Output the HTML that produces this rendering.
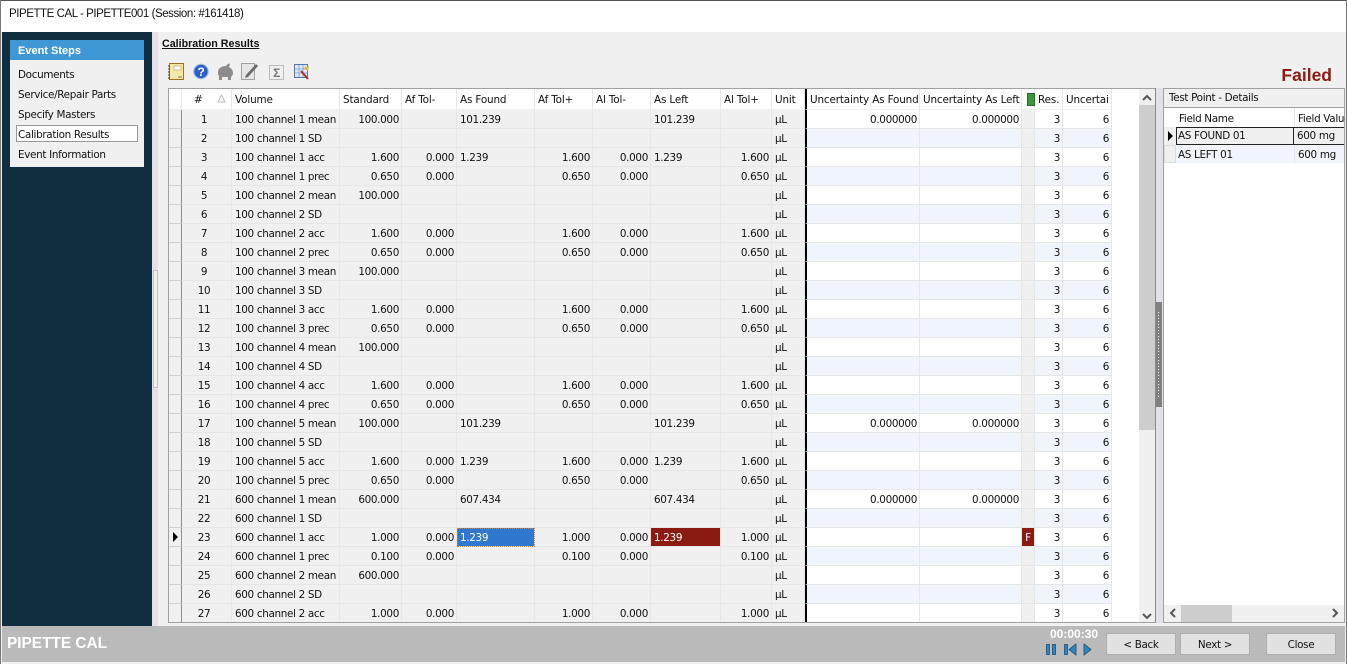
<!DOCTYPE html>
<html><head><meta charset="utf-8"><style>
html,body{margin:0;padding:0;width:1347px;height:664px;overflow:hidden;background:#f0f0f0}
body{position:relative;font-family:"DejaVu Sans","Liberation Sans",sans-serif;font-size:10.4px;letter-spacing:-.33px;color:#111}
.a{position:absolute;white-space:nowrap}
#g{position:absolute;left:169px;top:89px;width:970px;height:533px;overflow:hidden;background:#fff}
table{border-collapse:separate;border-spacing:0;table-layout:fixed;width:943px}
td,th{height:16px;padding:2px 3px 0;border-right:1px solid #e6e6e6;border-bottom:1px solid #e6e6e6;background:#f0f0f0;overflow:hidden;white-space:nowrap;font-weight:normal;text-align:left;box-sizing:content-box;line-height:16px}
th{background:#fff;height:18px;line-height:18px;border-bottom:1px solid #f0f0f0;letter-spacing:-.15px}
td:nth-child(1){padding:0;height:18px;line-height:18px;border-right:1px solid #8f8f8f;border-bottom:1px solid #d0d0d0}
th:nth-child(1){padding:2px 0 0;background:#fff;border-right:1px solid #e6e6e6}
td:nth-child(2){text-align:center;padding:2px 5px 0 0}
th:nth-child(2){padding-left:12px}
td:nth-child(4),td:nth-child(5),td:nth-child(7),td:nth-child(8),td:nth-child(10),td:nth-child(12),td:nth-child(13),td:nth-child(15),td:nth-child(16){text-align:right;padding-right:2px}
td:nth-child(12),th:nth-child(12){border-left:2px solid #000}
td:nth-child(12),td:nth-child(13),td:nth-child(15),td:nth-child(16){background:#fff}
tr:nth-child(even) td:nth-child(12),tr:nth-child(even) td:nth-child(13),tr:nth-child(even) td:nth-child(15),tr:nth-child(even) td:nth-child(16){background:#f0f5fc}
td:nth-child(14){padding:2px 0 0;text-align:center}
.btn{position:absolute;top:633px;height:20px;width:68px;background:#e1e1e1;border:1px solid #adadad;text-align:center;line-height:22px;color:#111}
.step{position:absolute;left:18px}
</style></head><body>
<div class="a" style="left:0;top:0;width:1347px;height:32px;background:#fff;border-top:1px solid #555;box-sizing:border-box"></div>
<div class="a" style="left:9px;top:8px;font-family:'Liberation Sans',sans-serif;font-size:11.500px;letter-spacing:-.44px;color:#111">PIPETTE CAL - PIPETTE001 (Session: #161418)</div>
<div class="a" style="left:0;top:0;width:1px;height:664px;background:#777"></div>
<div class="a" style="left:1346px;top:0;width:1px;height:664px;background:#777"></div>

<div class="a" style="left:2px;top:32px;width:150px;height:594px;background:#0f2f40"></div>
<div class="a" style="left:152px;top:32px;width:6px;height:594px;background:#e3e0e8"></div>
<div class="a" style="left:153px;top:270px;width:3px;height:116px;background:#efefef;border:1px solid #c4c4c4"></div>
<div class="a" style="left:10px;top:40px;width:134px;height:127px;background:#f0f0f0"></div>
<div class="a" style="left:10px;top:40px;width:134px;height:20px;background:#3f97d6"></div>
<div class="a" style="left:18px;top:44px;color:#fff;font-weight:bold;font-size:11px;letter-spacing:0;line-height:15px;font-family:'Liberation Sans',sans-serif">Event Steps</div>
<div class="a" style="left:16px;top:125px;width:120px;height:15px;background:#fff;border:1px solid #999"></div>
<div class="a step" style="top:69px">Documents</div>
<div class="a step" style="top:89px">Service/Repair Parts</div>
<div class="a step" style="top:109px">Specify Masters</div>
<div class="a step" style="top:129px">Calibration Results</div>
<div class="a step" style="top:149px">Event Information</div>

<div class="a" style="left:162px;top:38px;font-weight:bold;font-size:10.700px;letter-spacing:0;text-decoration:underline;font-family:'Liberation Sans',sans-serif;line-height:13px">Calibration Results</div>

<svg class="a" style="left:166px;top:61px" width="150" height="22" viewBox="0 0 150 22">
<rect x="3.500" y="2.500" width="14" height="16" fill="#f6e8a6" stroke="#9a7420"/><path d="M4 5H2M4 8H2M4 11H2M4 14H2M4 17H2" stroke="#333"/><rect x="8" y="5" width="7" height="4" fill="#fff" stroke="#b8a060" stroke-width=".6"/><path d="M12 16h4" stroke="#777"/>
<circle cx="35" cy="10.500" r="7.200" fill="#2a5cc4" stroke="#9db8e6" stroke-width="1.200"/><text x="35" y="15" text-anchor="middle" font-family="Liberation Sans" font-weight="bold" font-size="12" fill="#fff">?</text>
<path d="M52 11c0-4 4-6 8-6 1-2 3-3 4-2l-1 3c2 1 4 3 4 6 0 2-1 3-2 4v3h-3v-3h-6v3h-3v-4c-1-1-1-2-1-4z" fill="#8c8c8c"/>
<rect x="75.500" y="2.500" width="13" height="16" fill="#e6e6e6" stroke="#a0a0a0"/><path d="M80 14l10-11 2 2-10 11-3 1z" fill="#6a6a6a"/>
<rect x="103.500" y="4.500" width="14" height="14" fill="#f0f0f0" stroke="#bbb"/><text x="110.500" y="16" text-anchor="middle" font-family="Liberation Sans" font-weight="bold" font-size="12" fill="#777">Σ</text>
<rect x="128.500" y="3.500" width="13" height="13" fill="#dce8fa" stroke="#4f78b0"/><path d="M129 8h12M129 12h12M133 4v12M137 4v12" stroke="#7f9fcc" stroke-width=".8"/><path d="M135 10l7 8" stroke="#b03020" stroke-width="2"/><path d="M137 7l6-2-1 5z" fill="#e8b830"/>
</svg>

<div class="a" style="right:15px;top:65px;font-family:'Liberation Sans',sans-serif;font-weight:bold;font-size:17.500px;letter-spacing:0;color:#8b1a10;line-height:21px">Failed</div>

<div class="a" style="left:168px;top:88px;width:987px;height:535px;border:1px solid #a0a0a0;box-sizing:border-box"></div>
<div id="g"><table>
<colgroup><col style="width:13px"><col style="width:50px"><col style="width:108px"><col style="width:62px"><col style="width:55px"><col style="width:78px"><col style="width:58px"><col style="width:58px"><col style="width:70px"><col style="width:51px"><col style="width:33px"><col style="width:115px"><col style="width:102px"><col style="width:13px"><col style="width:28px"><col style="width:49px"></colgroup>
<thead><tr><th></th><th>#</th><th>Volume</th><th>Standard</th><th>Af Tol-</th><th>As Found</th><th>Af Tol+</th><th>Al Tol-</th><th>As Left</th><th>Al Tol+</th><th>Unit</th><th>Uncertainty As Found</th><th>Uncertainty As Left</th><th></th><th>Res.</th><th>Uncertai</th></tr></thead>
<tbody>
<tr><td></td><td>1</td><td>100 channel 1 mean</td><td>100.000</td><td></td><td>101.239</td><td></td><td></td><td>101.239</td><td></td><td>µL</td><td>0.000000</td><td>0.000000</td><td></td><td>3</td><td>6</td></tr>
<tr><td></td><td>2</td><td>100 channel 1 SD</td><td></td><td></td><td></td><td></td><td></td><td></td><td></td><td>µL</td><td></td><td></td><td></td><td>3</td><td>6</td></tr>
<tr><td></td><td>3</td><td>100 channel 1 acc</td><td>1.600</td><td>0.000</td><td>1.239</td><td>1.600</td><td>0.000</td><td>1.239</td><td>1.600</td><td>µL</td><td></td><td></td><td></td><td>3</td><td>6</td></tr>
<tr><td></td><td>4</td><td>100 channel 1 prec</td><td>0.650</td><td>0.000</td><td></td><td>0.650</td><td>0.000</td><td></td><td>0.650</td><td>µL</td><td></td><td></td><td></td><td>3</td><td>6</td></tr>
<tr><td></td><td>5</td><td>100 channel 2 mean</td><td>100.000</td><td></td><td></td><td></td><td></td><td></td><td></td><td>µL</td><td></td><td></td><td></td><td>3</td><td>6</td></tr>
<tr><td></td><td>6</td><td>100 channel 2 SD</td><td></td><td></td><td></td><td></td><td></td><td></td><td></td><td>µL</td><td></td><td></td><td></td><td>3</td><td>6</td></tr>
<tr><td></td><td>7</td><td>100 channel 2 acc</td><td>1.600</td><td>0.000</td><td></td><td>1.600</td><td>0.000</td><td></td><td>1.600</td><td>µL</td><td></td><td></td><td></td><td>3</td><td>6</td></tr>
<tr><td></td><td>8</td><td>100 channel 2 prec</td><td>0.650</td><td>0.000</td><td></td><td>0.650</td><td>0.000</td><td></td><td>0.650</td><td>µL</td><td></td><td></td><td></td><td>3</td><td>6</td></tr>
<tr><td></td><td>9</td><td>100 channel 3 mean</td><td>100.000</td><td></td><td></td><td></td><td></td><td></td><td></td><td>µL</td><td></td><td></td><td></td><td>3</td><td>6</td></tr>
<tr><td></td><td>10</td><td>100 channel 3 SD</td><td></td><td></td><td></td><td></td><td></td><td></td><td></td><td>µL</td><td></td><td></td><td></td><td>3</td><td>6</td></tr>
<tr><td></td><td>11</td><td>100 channel 3 acc</td><td>1.600</td><td>0.000</td><td></td><td>1.600</td><td>0.000</td><td></td><td>1.600</td><td>µL</td><td></td><td></td><td></td><td>3</td><td>6</td></tr>
<tr><td></td><td>12</td><td>100 channel 3 prec</td><td>0.650</td><td>0.000</td><td></td><td>0.650</td><td>0.000</td><td></td><td>0.650</td><td>µL</td><td></td><td></td><td></td><td>3</td><td>6</td></tr>
<tr><td></td><td>13</td><td>100 channel 4 mean</td><td>100.000</td><td></td><td></td><td></td><td></td><td></td><td></td><td>µL</td><td></td><td></td><td></td><td>3</td><td>6</td></tr>
<tr><td></td><td>14</td><td>100 channel 4 SD</td><td></td><td></td><td></td><td></td><td></td><td></td><td></td><td>µL</td><td></td><td></td><td></td><td>3</td><td>6</td></tr>
<tr><td></td><td>15</td><td>100 channel 4 acc</td><td>1.600</td><td>0.000</td><td></td><td>1.600</td><td>0.000</td><td></td><td>1.600</td><td>µL</td><td></td><td></td><td></td><td>3</td><td>6</td></tr>
<tr><td></td><td>16</td><td>100 channel 4 prec</td><td>0.650</td><td>0.000</td><td></td><td>0.650</td><td>0.000</td><td></td><td>0.650</td><td>µL</td><td></td><td></td><td></td><td>3</td><td>6</td></tr>
<tr><td></td><td>17</td><td>100 channel 5 mean</td><td>100.000</td><td></td><td>101.239</td><td></td><td></td><td>101.239</td><td></td><td>µL</td><td>0.000000</td><td>0.000000</td><td></td><td>3</td><td>6</td></tr>
<tr><td></td><td>18</td><td>100 channel 5 SD</td><td></td><td></td><td></td><td></td><td></td><td></td><td></td><td>µL</td><td></td><td></td><td></td><td>3</td><td>6</td></tr>
<tr><td></td><td>19</td><td>100 channel 5 acc</td><td>1.600</td><td>0.000</td><td>1.239</td><td>1.600</td><td>0.000</td><td>1.239</td><td>1.600</td><td>µL</td><td></td><td></td><td></td><td>3</td><td>6</td></tr>
<tr><td></td><td>20</td><td>100 channel 5 prec</td><td>0.650</td><td>0.000</td><td></td><td>0.650</td><td>0.000</td><td></td><td>0.650</td><td>µL</td><td></td><td></td><td></td><td>3</td><td>6</td></tr>
<tr><td></td><td>21</td><td>600 channel 1 mean</td><td>600.000</td><td></td><td>607.434</td><td></td><td></td><td>607.434</td><td></td><td>µL</td><td>0.000000</td><td>0.000000</td><td></td><td>3</td><td>6</td></tr>
<tr><td></td><td>22</td><td>600 channel 1 SD</td><td></td><td></td><td></td><td></td><td></td><td></td><td></td><td>µL</td><td></td><td></td><td></td><td>3</td><td>6</td></tr>
<tr><td><svg width="13" height="18" style="display:block"><path d="M4 4l5 5-5 5z" fill="#000"/></svg></td><td>23</td><td>600 channel 1 acc</td><td>1.000</td><td>0.000</td><td style="background:#3077d0;color:#fff;outline:1px dotted #e08020;outline-offset:-1px">1.239</td><td>1.000</td><td>0.000</td><td style="background:#8b1a10;color:#fff">1.239</td><td>1.000</td><td>µL</td><td></td><td></td><td style="background:#8b1a10;color:#fff">F</td><td>3</td><td>6</td></tr>
<tr><td></td><td>24</td><td>600 channel 1 prec</td><td>0.100</td><td>0.000</td><td></td><td>0.100</td><td>0.000</td><td></td><td>0.100</td><td>µL</td><td></td><td></td><td></td><td>3</td><td>6</td></tr>
<tr><td></td><td>25</td><td>600 channel 2 mean</td><td>600.000</td><td></td><td></td><td></td><td></td><td></td><td></td><td>µL</td><td></td><td></td><td></td><td>3</td><td>6</td></tr>
<tr><td></td><td>26</td><td>600 channel 2 SD</td><td></td><td></td><td></td><td></td><td></td><td></td><td></td><td>µL</td><td></td><td></td><td></td><td>3</td><td>6</td></tr>
<tr><td></td><td>27</td><td>600 channel 2 acc</td><td>1.000</td><td>0.000</td><td></td><td>1.000</td><td>0.000</td><td></td><td>1.000</td><td>µL</td><td></td><td></td><td></td><td>3</td><td>6</td></tr>
</tbody></table></div>
<svg class="a" style="left:217px;top:94px" width="9" height="9"><path d="M4.500 1L8 8H1z" fill="#fff" stroke="#bbb"/></svg>
<div class="a" style="left:1027px;top:93px;width:8px;height:13px;background:#3a9a3a;border:1px solid #2a6a2a;box-sizing:border-box"></div>
<div class="a" style="left:1139px;top:89px;width:16px;height:533px;background:#f0f0f0"></div>
<div class="a" style="left:1139px;top:105px;width:16px;height:325px;background:#cdcdcd"></div>
<svg class="a" style="left:1139px;top:89px" width="16" height="533"><path d="M4 11l4-4 4 4M4 525l4 4 4-4" fill="none" stroke="#555" stroke-width="2"/></svg>

<div class="a" style="left:1155px;top:88px;width:8px;height:535px;background:#e3e0e8;border-left:1px solid #888;box-sizing:border-box"></div>
<div class="a" style="left:1156px;top:302px;width:6px;height:105px;background:#808080"></div>
<div class="a" style="left:1158px;top:312px;width:1px;height:85px;background:repeating-linear-gradient(#fff 0 1px,transparent 1px 3px)"></div>

<div class="a" style="left:1163px;top:88px;width:182px;height:535px;background:#fff;border:1px solid #a0a0a0;box-sizing:border-box"></div>
<div class="a" style="left:1164px;top:89px;width:180px;height:18px;background:#f0f0f0;border-bottom:1px solid #a0a0a0;line-height:19px;text-indent:5px">Test Point - Details</div>
<div class="a" style="left:1179px;top:108px;height:19px;line-height:23px">Field Name</div>
<div class="a" style="left:1294px;top:108px;width:50px;height:19px;line-height:23px;overflow:hidden;border-left:1px solid #e6e6e6;text-indent:3px">Field Value</div>
<div class="a" style="left:1164px;top:127px;width:12px;height:18px;background:#f0f0f0"></div>
<svg class="a" style="left:1164px;top:127px" width="12" height="18"><path d="M4 4l5 5-5 5z" fill="#000"/></svg>
<div class="a" style="left:1176px;top:127px;width:118px;height:18px;background:#f0f0f0;border:1px solid #222;box-sizing:border-box;line-height:17px;text-indent:1px">AS FOUND 01</div>
<div class="a" style="left:1294px;top:127px;width:50px;height:18px;background:#f0f0f0;line-height:17px;text-indent:3px;border-top:1px solid #222;border-bottom:1px solid #222;box-sizing:border-box">600 mg</div>
<div class="a" style="left:1164px;top:145px;width:12px;height:18px;background:#f0f0f0;border:1px solid #ddd;box-sizing:border-box"></div>
<div class="a" style="left:1176px;top:145px;width:168px;height:18px;background:#f0f5fc;line-height:20px;text-indent:2px">AS LEFT 01</div>
<div class="a" style="left:1294px;top:145px;width:50px;height:18px;line-height:20px;text-indent:3px;border-left:1px solid #e6e6e6">600 mg</div>
<div class="a" style="left:1164px;top:605px;width:180px;height:17px;background:#f0f0f0"></div>
<div class="a" style="left:1181px;top:605px;width:51px;height:17px;background:#cdcdcd"></div>
<svg class="a" style="left:1164px;top:605px" width="180" height="17"><path d="M11 4l-4 4 4 4M169 4l4 4-4 4" fill="none" stroke="#555" stroke-width="2"/></svg>

<div class="a" style="left:2px;top:626px;width:1343px;height:36px;background:#bababa"></div>
<div class="a" style="left:7px;top:634px;font-family:'Liberation Sans',sans-serif;font-weight:bold;font-size:15.400px;letter-spacing:0;line-height:20px;color:#fff">PIPETTE CAL</div>
<div class="a" style="left:1050px;top:627px;font-family:'Liberation Sans',sans-serif;font-weight:bold;font-size:12px;letter-spacing:0;line-height:15px;color:#fff">00:00:30</div>
<svg class="a" style="left:1044px;top:642px" width="52" height="14"><g fill="#2f85c0" stroke="#1a4f78" stroke-width=".8"><rect x="2.500" y="2.500" width="3" height="10"/><rect x="8.500" y="2.500" width="3" height="10"/><rect x="20.500" y="2.500" width="3" height="10"/><path d="M32 2v11l-7-5.500zM40 2v11l7-5.500z"/></g></svg>
<div class="btn" style="left:1106px">&lt; Back</div>
<div class="btn" style="left:1180px">Next &gt;</div>
<div class="btn" style="left:1266px">Close</div>
</body></html>
